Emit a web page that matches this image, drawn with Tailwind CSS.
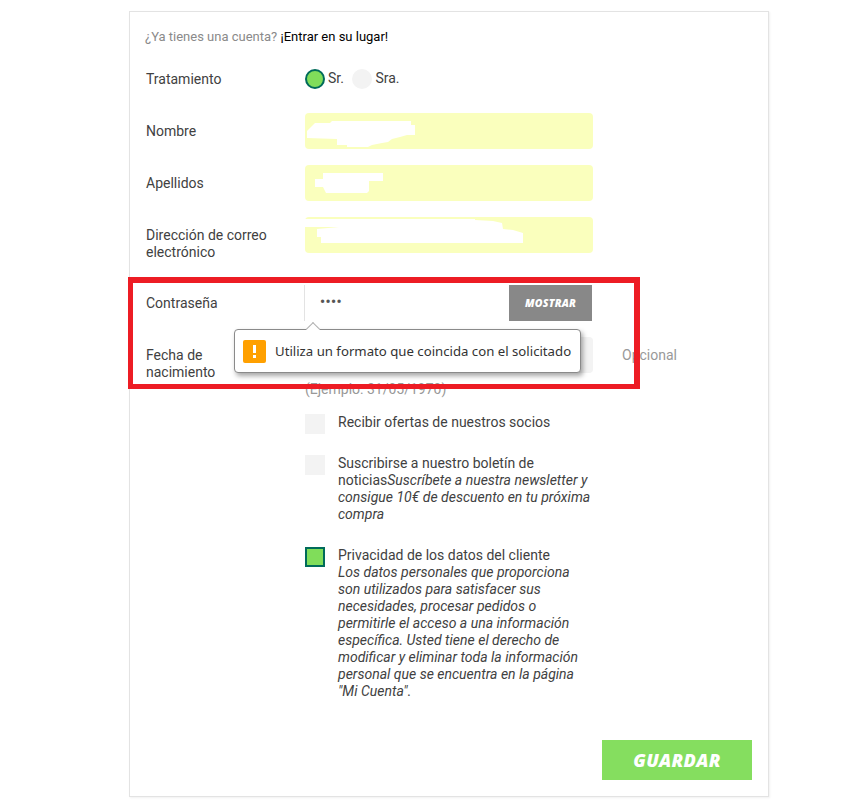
<!DOCTYPE html>
<html lang="es">
<head>
    <meta charset="UTF-8">
    <meta name="viewport" content="width=device-width, initial-scale=1.0">
    <title>Mi cuenta</title>
    <script src="https://cdn.jsdelivr.net/npm/@tailwindcss/browser@4"></script>
</head>
<body class="bg-white min-h-screen font-['Roboto',sans-serif] text-[14px] leading-[17px] text-[#414141]">
    <div class="relative w-[851px] h-[805px] overflow-hidden pt-[11px] pl-[129px]">
        <div class="w-[640px] h-[786px] border border-[#e3e3e3] shadow-[1px_1px_2px_rgba(0,0,0,0.06)] px-[15px] pt-[16px] pb-[16px] bg-white">
            <p class="text-[13px] mb-[16px] text-[#8a8a8a]">¿Ya tienes una cuenta? <a href="#" class="text-black">¡Entrar en su lugar!</a></p>

            <div class="flex flex-col gap-[16px]">
                <div class="flex h-[36px]">
                    <label class="w-[160px] pl-[1px] pt-[10px]">Tratamiento</label>
                    <div class="flex items-center h-[36px]">
                        <span class="w-[20px] h-[20px] rounded-full bg-[#80dd5a] border-2 border-[#006b5a]"></span>
                        <span class="ml-[3px] mr-[8px] -mt-[2px]">Sr.</span>
                        <span class="w-[20px] h-[20px] rounded-full bg-[#f3f3f3]"></span>
                        <span class="ml-[3.5px] -mt-[2px]">Sra.</span>
                    </div>
                </div>

                <div class="flex h-[36px]">
                    <label class="w-[160px] pl-[1px] pt-[10px]">Nombre</label>
                    <div class="w-[288px] h-[36px] rounded-[4px] bg-[#faffbd]">
                        <svg width="288" height="36" viewBox="0 0 288 36" class="block"><polygon fill="#fff" points="2,25 2,18 10,10 25,10 27,8 106,8 106,12 110,12 110,22 102,22 95,24 87,26 83,29 77,30 67,32 63,34 42,34 42,32 32,32 32,26"/></svg>
                    </div>
                </div>

                <div class="flex h-[36px]">
                    <label class="w-[160px] pl-[1px] pt-[10px]">Apellidos</label>
                    <div class="w-[288px] h-[36px] rounded-[4px] bg-[#faffbd]">
                        <svg width="288" height="36" viewBox="0 0 288 36" class="block"><polygon fill="#fff" points="10,14 18,14 18,8 78,8 78,16 64,16 64,26 62,28 21,28 20,26 18,22 10,22"/></svg>
                    </div>
                </div>

                <div class="flex h-[52px]">
                    <label class="w-[130px] mr-[30px] pl-[1px] pt-[10px]">Dirección de correo electrónico</label>
                    <div class="w-[288px] h-[36px] rounded-[4px] bg-[#faffbd]">
                        <svg width="288" height="36" viewBox="0 0 288 36" class="block"><polygon fill="#fff" points="0,2 170,2 170,3 188,4 197,6 198,12 208,13 218,16 218,26 16,26 16,20 12,20 12,12 34,10 0,10"/></svg>
                    </div>
                </div>

                <div class="flex h-[36px]">
                    <label class="w-[159px] pl-[1px] pt-[10px]">Contraseña</label>
                    <div class="flex w-[288px] h-[36px] border-l border-[#e3e3e3]">
                        <span class="flex-1 pl-[15px] pt-[9px] text-[14px] font-bold text-[#555] tracking-[0.5px]">••••</span>
                        <button class="w-[83px] h-[36px] bg-[#888888] text-white font-['Open_Sans',sans-serif] italic font-extrabold text-[10.5px] tracking-[0.2px]">MOSTRAR</button>
                    </div>
                </div>

                <div class="flex">
                    <label class="w-[120px] mr-[40px] pl-[1px] pt-[10px]">Fecha de nacimiento</label>
                    <div>
                        <div class="flex items-center">
                            <div class="w-[288px] h-[36px] rounded-[4px] bg-[#f3f3f3]"></div>
                            <span class="ml-[29px] text-[#999999]">Opcional</span>
                        </div>
                        <p class="mt-[8px] text-[#999999]">(Ejemplo: 31/05/1970)</p>
                    </div>
                </div>
            </div>

            <div class="ml-[160px] mt-[16px] w-[288px] flex flex-col">
                <div class="flex">
                    <span class="w-[20px] h-[20px] shrink-0 bg-[#f3f3f3]"></span>
                    <span class="ml-[13px]">Recibir ofertas de nuestros socios</span>
                </div>
                <div class="flex mt-[21px]">
                    <span class="w-[20px] h-[20px] shrink-0 bg-[#f3f3f3]"></span>
                    <span class="ml-[13px] w-[255px]">Suscribirse a nuestro boletín de noticias<em>Suscríbete a nuestra newsletter y consigue 10€ de descuento en tu próxima compra</em></span>
                </div>
                <div class="flex mt-[24px]">
                    <span class="w-[20px] h-[20px] shrink-0 bg-[#80dd5a] border-2 border-[#006b5a]"></span>
                    <span class="ml-[13px] w-[240px]">Privacidad de los datos del cliente<br><em>Los datos personales que proporciona son utilizados para satisfacer sus necesidades, procesar pedidos o permitirle el acceso a una información específica. Usted tiene el derecho de modificar y eliminar toda la información personal que se encuentra en la página "Mi Cuenta".</em></span>
                </div>
            </div>

            <div class="flex justify-end mt-[40px] pr-[1px]">
                <button class="w-[150px] h-[40px] bg-[#85de5f] text-white font-['Open_Sans',sans-serif] italic font-extrabold text-[18px] tracking-[0.3px]">GUARDAR</button>
            </div>
        </div>

        <!-- validation bubble -->
        <div class="absolute left-[234px] top-[329px] w-[347px] h-[44px] flex items-center bg-white border border-[#8a8a8a] rounded-[4px] shadow-[2px_3px_5px_rgba(0,0,0,0.35)] pl-[8px] font-['Noto_Sans',sans-serif] text-[13.2px] text-[#333]">
            <span class="absolute left-[73px] -top-[6px] w-[10px] h-[10px] rotate-45 bg-white border-l border-t border-[#b0b0b0]"></span>
            <svg width="23" height="23" viewBox="0 0 23 23" class="shrink-0"><rect width="23" height="23" rx="2" fill="#ffa000"/><rect x="10" y="5" width="3" height="8" fill="#fff"/><rect x="10" y="15" width="3" height="3" fill="#fff"/></svg>
            <span class="ml-[9px] whitespace-nowrap">Utiliza un formato que coincida con el solicitado</span>
        </div>

        <!-- red annotation box -->
        <div class="absolute left-[128px] top-[277px] w-[512px] h-[112px] border-[6px] border-[#ed1c24] border-b-[5px] border-l-[5px]"></div>
    </div>
</body>
</html>
